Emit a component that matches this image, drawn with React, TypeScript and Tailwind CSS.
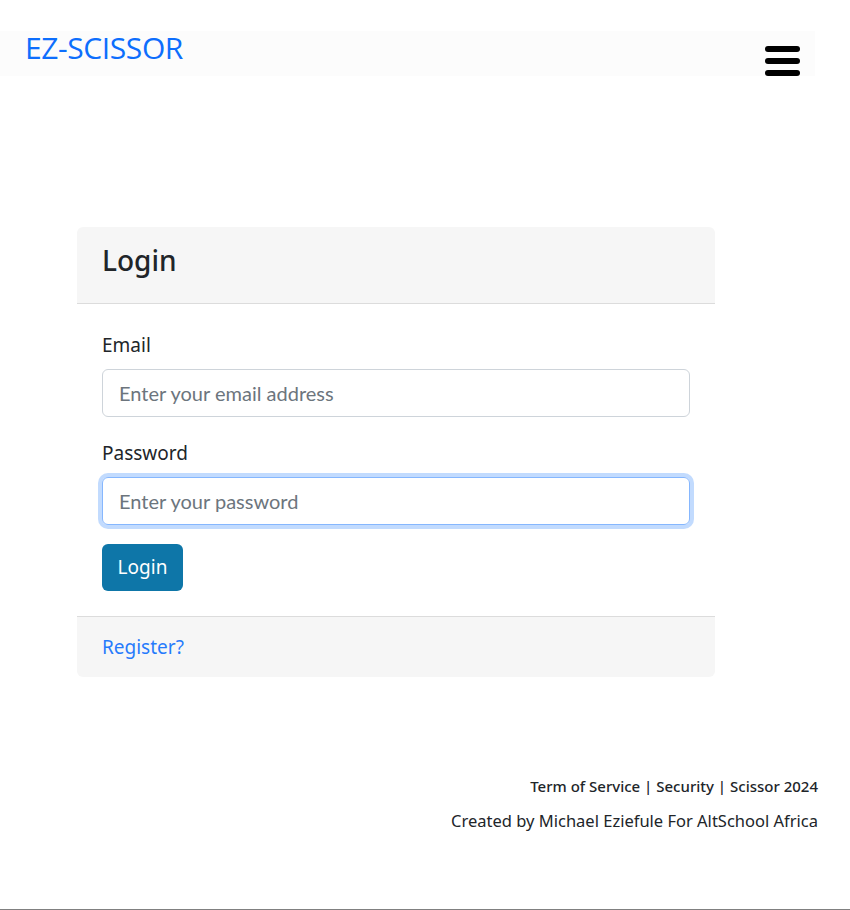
export default function App() {
    const bars = [0, 1, 2];

    return (
        <div className="min-h-[910px] bg-white flex flex-col border-b border-[#808080] font-['Noto_Sans',sans-serif] text-[#212529]">
            <nav className="mt-[31px] w-[815px] h-[45px] bg-[#fcfcfc] flex justify-between">
                <p className="pl-[25px] text-[30px] leading-[34px] text-[#0d6efd] font-['Open_Sans',sans-serif] font-medium tracking-[-0.4px]">
                    EZ-SCISSOR
                </p>
                <div className="mt-[15px] mr-[15px] w-[35px] flex flex-col gap-[6px]">
                    {bars.map((b) => (
                        <span key={b} className="block h-[6px] rounded-full bg-black" />
                    ))}
                </div>
            </nav>

            <div className="mt-[151px] ml-[77px] w-[638px] rounded-md bg-white">
                <div className="h-[77px] bg-[#f6f6f6] rounded-t-md border-b border-[#dcdcdc] px-[25px] pb-[10px] flex items-center">
                    <h1 className="text-[28px] font-medium">Login</h1>
                </div>

                <div className="px-[25px] pt-[27px] pb-[25px]">
                    <label className="block text-[19px] leading-[28px]">Email</label>
                    <input
                        className="mt-[10px] w-[588px] h-[48px] px-[16px] rounded-md border border-[#ced4da] text-[20px] font-['Lato',sans-serif] placeholder:text-[#6c757d] outline-none"
                        placeholder="Enter your email address"
                    />

                    <label className="block mt-[22px] text-[19px] leading-[28px]">Password</label>
                    <input
                        type="password"
                        className="mt-[10px] w-[588px] h-[48px] px-[16px] rounded-md border border-[#86b7fe] shadow-[0_0_0_4px_rgba(13,110,253,0.25)] text-[20px] font-['Lato',sans-serif] placeholder:text-[#6c757d] outline-none"
                        placeholder="Enter your password"
                    />

                    <button className="block mt-[19px] w-[81px] h-[47px] rounded-md bg-[#0e76a8] text-white text-[19px]">
                        Login
                    </button>
                </div>

                <div className="h-[61px] bg-[#f6f6f6] rounded-b-md border-t border-[#dcdcdc] px-[25px] flex items-center">
                    <a href="#" className="text-[19px] text-[#0d6efd] opacity-90">Register?</a>
                </div>
            </div>

            <footer className="mt-[98px] pr-[32px] flex flex-col items-end">
                <p className="text-[15px] font-medium">Term of Service | Security | Scissor 2024</p>
                <p className="mt-[11px] text-[16.5px]">Created by Michael Eziefule For AltSchool Africa</p>
            </footer>
        </div>
    );
}
